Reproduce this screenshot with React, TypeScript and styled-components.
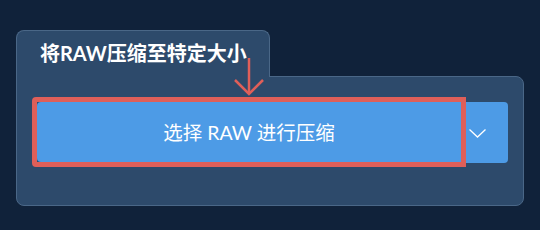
import React from "react";
import styled, { createGlobalStyle } from "styled-components";

const colors = {
  page: "#10223a",
  panel: "#2d4a6b",
  border: "#4a6787",
  blue: "#4d9be6",
  red: "#df5f59",
  white: "#ffffff",
};

const GlobalStyle = createGlobalStyle`
  html, body {
    margin: 0;
    padding: 0;
    background: ${colors.page};
  }
  body {
    width: 540px;
    height: 230px;
    overflow: hidden;
    font-family: Lato, "Noto Sans CJK SC", sans-serif;
  }
`;

const Page = styled.div`
  padding: 30px 16px 0 16px;
`;

const Section = styled.section`
  display: flex;
  flex-direction: column;
  align-items: flex-start;
`;

const Tab = styled.div`
  position: relative;
  z-index: 1;
  box-sizing: border-box;
  width: 254px;
  height: 47px;
  margin-bottom: -1px;
  padding: 0 0 4px 23px;
  display: flex;
  align-items: center;
  background: ${colors.panel};
  border: 1px solid ${colors.border};
  border-bottom: none;
  border-radius: 8px 8px 0 0;
  color: ${colors.white};
  font-size: 20px;
  font-weight: 700;
`;

const Panel = styled.div`
  box-sizing: border-box;
  width: 508px;
  padding: 25px 15px 42px 20px;
  background: ${colors.panel};
  border: 1px solid ${colors.border};
  border-radius: 0 8px 8px 8px;
`;

const ButtonGroup = styled.div`
  display: flex;
  height: 61px;
`;

const MainButton = styled.button`
  position: relative;
  flex: 0 0 424px;
  height: 60px;
  border: none;
  margin: 0;
  padding: 0 0 1px;
  background: ${colors.blue};
  border-radius: 4px 0 0 4px;
  color: ${colors.white};
  font-family: Lato, "Noto Sans CJK SC", sans-serif;
  font-size: 19.5px;
  font-weight: 400;
  cursor: pointer;
`;

const DropButton = styled.button`
  flex: 1;
  height: 61px;
  border: none;
  margin: 0;
  padding: 2px 0 0 8px;
  display: flex;
  align-items: center;
  background: ${colors.blue};
  border-radius: 0 4px 4px 0;
  cursor: pointer;
`;

const Highlight = styled.span`
  position: absolute;
  inset: -5px;
  border: 5px solid ${colors.red};
  border-radius: 4px 0 0 4px;
  pointer-events: none;
`;

const Pointer = styled.svg`
  position: absolute;
  z-index: 2;
  left: 50%;
  top: -44px;
  margin-left: -16px;
  pointer-events: none;
`;

export default function App() {
  return (
    <Page>
      <GlobalStyle />
      <Section>
        <Tab>将RAW压缩至特定大小</Tab>
        <Panel>
          <ButtonGroup>
            <MainButton>
              选择 RAW 进行压缩
              <Highlight />
              <Pointer width="32" height="38" viewBox="0 0 32 38">
                <line x1="16" y1="0" x2="16" y2="36" stroke={colors.red} strokeWidth="2.5" />
                <polyline
                  points="2,22 16,36 30,22"
                  fill="none"
                  stroke={colors.red}
                  strokeWidth="2.5"
                />
              </Pointer>
            </MainButton>
            <DropButton aria-label="更多选项">
              <svg width="17" height="9" viewBox="0 0 17 9">
                <polyline
                  points="0.5,0.5 8.5,8 16.5,0.5"
                  fill="none"
                  stroke={colors.white}
                  strokeWidth="1.3"
                />
              </svg>
            </DropButton>
          </ButtonGroup>
        </Panel>
      </Section>
    </Page>
  );
}
